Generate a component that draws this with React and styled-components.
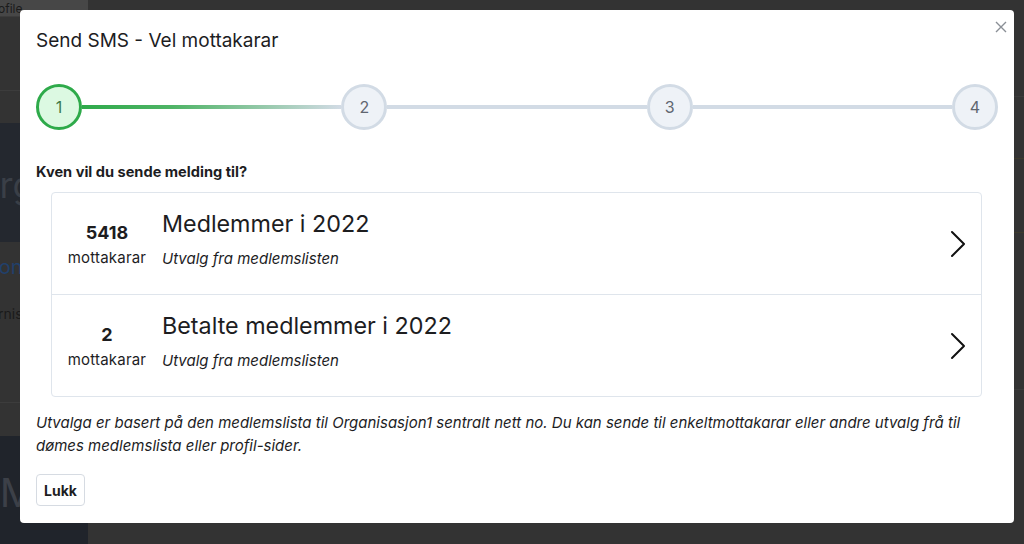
import React from 'react'
import styled, { createGlobalStyle } from 'styled-components'

const GlobalStyle = createGlobalStyle`
  html, body { margin: 0; padding: 0; }
  body {
    width: 1024px;
    height: 544px;
    overflow: hidden;
    font-family: Inter, "Noto Sans", "Liberation Sans", sans-serif;
    background: #333;
  }
`

const colors = {
  text: '#1d1d1f',
  border: '#dfe5ec',
  green: '#2eaa4a',
  greenLight: '#dcf9e2',
  stepFill: '#eef2f7',
  stepBorder: '#d2dbe5',
}

/* dimmed page behind the modal */
const Page = styled.div`
  position: relative;
  display: flex;
  width: 1024px;
  height: 544px;
  background: #333;
  overflow: hidden;
`

const Sidebar = styled.div`
  width: 88px;
  display: flex;
  flex-direction: column;
`

const SideBlock = styled.div`
  height: ${p => p.h}px;
  background: ${p => p.bg || 'transparent'};
  border-bottom: ${p => (p.line ? '1px solid #3c3c3c' : 'none')};
  color: ${p => p.color || '#1b1b1b'};
  font-size: ${p => p.size || 13}px;
  line-height: ${p => p.h}px;
  white-space: nowrap;
  overflow: hidden;
  box-sizing: border-box;
  text-indent: ${p => p.indent || 0}px;
`

const Main = styled.div`
  flex: 1;
  display: flex;
  flex-direction: column;
`

const MainLine = styled.div`
  height: ${p => p.h}px;
  border-bottom: 1px solid ${p => p.color || '#3b3b3b'};
`

const Modal = styled.div`
  position: absolute;
  left: 20px;
  top: 10px;
  width: 994px;
  height: 513px;
  background: #fff;
  border-radius: 4px;
  box-sizing: border-box;
  padding: 0 16px;
  display: flex;
  flex-direction: column;
`

const Header = styled.div`
  display: flex;
  justify-content: space-between;
  align-items: flex-start;
  height: 74px;
`

const Title = styled.h2`
  margin: 19px 0 0 0;
  font-size: 19px;
  font-weight: 400;
  color: ${colors.text};
`

const CloseButton = styled.button`
  border: none;
  background: none;
  padding: 0;
  margin: 10px -10px 0 0;
  width: 14px;
  height: 14px;
  cursor: pointer;
`

const Stepper = styled.div`
  display: flex;
  align-items: center;
  height: 46px;
`

const Step = styled.div`
  width: 46px;
  height: 46px;
  box-sizing: border-box;
  border-radius: 50%;
  border: 3px solid ${p => (p.active ? colors.green : colors.stepBorder)};
  background: ${p => (p.active ? colors.greenLight : colors.stepFill)};
  color: ${p => (p.active ? '#3d7a4a' : '#5f6670')};
  font-size: 16px;
  display: flex;
  align-items: center;
  justify-content: center;
  flex-shrink: 0;
`

const Connector = styled.div`
  flex: 1;
  height: 4px;
  background: ${p =>
    p.done
      ? `linear-gradient(90deg, ${colors.green} 0%, #4fb466 35%, ${colors.stepBorder} 100%)`
      : colors.stepBorder};
`

const Question = styled.div`
  margin-top: 33px;
  font-size: 14.6px;
  font-weight: 700;
  color: ${colors.text};
`

const List = styled.div`
  margin: 11px 16px 0 15px;
  border: 1px solid ${colors.border};
  border-radius: 4px;
  display: flex;
  flex-direction: column;
`

const Row = styled.div`
  height: ${p => (p.first ? 101 : 102)}px;
  box-sizing: border-box;
  display: flex;
  align-items: center;
  padding: 0 14px 0 0;
  border-top: ${p => (p.first ? 'none' : `1px solid ${colors.border}`)};
  cursor: pointer;
`

const Count = styled.div`
  width: 110px;
  display: flex;
  flex-direction: column;
  align-items: center;
  align-self: flex-start;
  padding-top: 28px;
`

const CountNumber = styled.div`
  font-size: 18px;
  font-weight: 700;
  color: ${colors.text};
  line-height: 24px;
`

const CountLabel = styled.div`
  font-size: 15px;
  color: ${colors.text};
  margin-top: 3px;
  letter-spacing: 0.2px;
`

const Info = styled.div`
  flex: 1;
  align-self: flex-start;
  padding-top: 16px;
`

const RowTitle = styled.div`
  font-size: 23.3px;
  color: ${colors.text};
  line-height: 30px;
`

const RowSub = styled.div`
  font-size: 15px;
  font-style: italic;
  color: ${colors.text};
  margin-top: 10px;
`

const Note = styled.p`
  margin: 14px 0 0 0;
  font-size: 15px;
  font-style: italic;
  line-height: 23px;
  color: ${colors.text};
`

const Button = styled.button`
  align-self: flex-start;
  margin-top: 17px;
  height: 32px;
  padding: 0 7px;
  background: #fff;
  border: 1px solid #d6dbe2;
  border-radius: 4px;
  font-family: inherit;
  font-size: 14px;
  font-weight: 700;
  color: ${colors.text};
`

const Chevron = () => (
  <svg width="18" height="28" viewBox="0 0 18 28" fill="none">
    <path d="M3 2l12 12-12 12" stroke="#111" strokeWidth="2" strokeLinecap="round" strokeLinejoin="round" />
  </svg>
)

const groups = [
  { count: 5418, title: 'Medlemmer i 2022', sub: 'Utvalg fra medlemslisten' },
  { count: 2, title: 'Betalte medlemmer i 2022', sub: 'Utvalg fra medlemslisten' },
]

export default function App() {
  return (
    <>
      <GlobalStyle />
      <Page>
        <Sidebar>
          <SideBlock h={18} bg="#474747" line size={12} indent={-2}>ofile</SideBlock>
          <SideBlock h={78} line />
          <SideBlock h={34} />
          <SideBlock h={125} bg="#24282f" size={36} color="#3a3f47" indent={-22}>org</SideBlock>
          <SideBlock h={50} size={20} color="#21406b" indent={-14}>Kon</SideBlock>
          <SideBlock h={50} size={14} color="#1a1a1a" indent={-18}>Fornis</SideBlock>
          <SideBlock h={70} line />
          <SideBlock h={35} />
          <SideBlock h={114} bg="#20242b" size={40} color="#3c4048" indent={-26}>SM</SideBlock>
        </Sidebar>
        <Main>
          <MainLine h={96} />
          <MainLine h={61} color="#3d3a2c" />
          <MainLine h={73} color="#3d3a2c" />
          <MainLine h={156} />
        </Main>

        <Modal>
          <Header>
            <Title>Send SMS - Vel mottakarar</Title>
            <CloseButton aria-label="Lukk">
              <svg width="14" height="14" viewBox="0 0 14 14">
                <path d="M2 2l10 10M12 2L2 12" stroke="#8a8f96" strokeWidth="1.4" />
              </svg>
            </CloseButton>
          </Header>

          <Stepper>
            <Step active>1</Step>
            <Connector done />
            <Step>2</Step>
            <Connector />
            <Step>3</Step>
            <Connector />
            <Step>4</Step>
          </Stepper>

          <Question>Kven vil du sende melding til?</Question>

          <List>
            {groups.map((g, i) => (
              <Row key={g.title} first={i === 0}>
                <Count>
                  <CountNumber>{g.count}</CountNumber>
                  <CountLabel>mottakarar</CountLabel>
                </Count>
                <Info>
                  <RowTitle>{g.title}</RowTitle>
                  <RowSub>{g.sub}</RowSub>
                </Info>
                <Chevron />
              </Row>
            ))}
          </List>

          <Note>
            Utvalga er basert på den medlemslista til Organisasjon1 sentralt nett no. Du kan sende til enkeltmottakarar eller andre utvalg frå til
            dømes medlemslista eller profil-sider.
          </Note>

          <Button>Lukk</Button>
        </Modal>
      </Page>
    </>
  )
}
